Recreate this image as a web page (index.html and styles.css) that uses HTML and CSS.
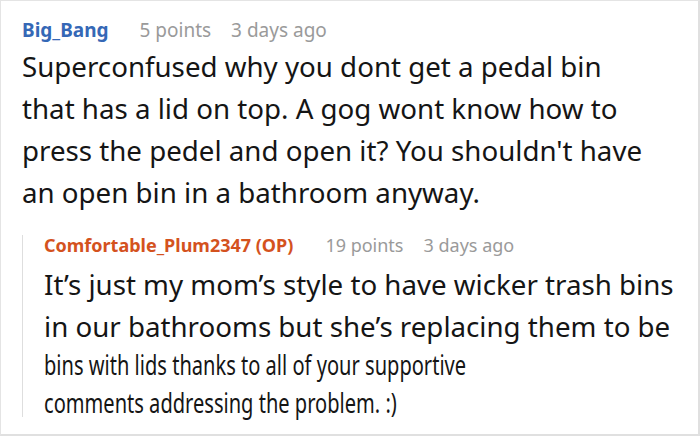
FILE: index.html
```html
<!DOCTYPE html>
<html>
<head>
<meta charset="utf-8">
<link rel="stylesheet" href="styles.css">
</head>
<body>
<div class="frame">
  <div class="comment">
    <div class="meta">
      <span class="author">Big_Bang</span>
      <span class="info">5 points</span>
      <span class="info">3 days ago</span>
    </div>
    <div class="text">
      <span class="line">Superconfused why you dont get a pedal bin</span>
      <span class="line">that has a lid on top. A gog wont know how to</span>
      <span class="line">press the pedel and open it? You shouldn't have</span>
      <span class="line">an open bin in a bathroom anyway.</span>
    </div>
    <div class="reply">
      <div class="meta reply-meta">
        <span class="author op">Comfortable_Plum2347 (OP)</span>
        <span class="info">19 points</span>
        <span class="info">3 days ago</span>
      </div>
      <div class="text reply-text">
        <span class="line">It’s just my mom’s style to have wicker trash bins</span>
        <span class="line">in our bathrooms but she’s replacing them to be</span>
        <div class="squeezed">
          <span class="line">bins with lids thanks to all of your supportive</span>
          <span class="line">comments addressing the problem. :)</span>
        </div>
      </div>
    </div>
  </div>
</div>
</body>
</html>
```

FILE: styles.css
```css
* { box-sizing: border-box; }
html, body {
  margin: 0;
  padding: 0;
  background: #ffffff;
}
body {
  font-family: "Noto Sans", "Open Sans", sans-serif;
  color: #151515;
}
.frame {
  width: 700px;
  height: 436px;
  border: 1px solid #e4e4e4;
  border-right: 2px solid #e0e0e0;
  border-bottom: 2px solid #e0e0e0;
  overflow: hidden;
}
.comment {
  padding: 17px 20px 0 21px;
}
.meta {
  display: flex;
  align-items: baseline;
  font-size: 19px;
  line-height: 24px;
  white-space: nowrap;
}
.author {
  font-weight: 700;
  color: #3568b6;
  margin-right: 31px;
}
.author.op {
  color: #d4521e;
  margin-right: 32px;
}
.info {
  color: #9a9a9a;
  margin-right: 20px;
}
.text {
  margin-top: 3px;
  font-size: 27.7px;
  line-height: 42px;
}
.line {
  display: block;
  white-space: nowrap;
}
.reply {
  margin-top: 23px;
  border-left: 1px solid #dedede;
  padding-left: 21px;
  height: 182px;
}
.reply-meta {
  font-size: 18px;
  line-height: 20px;
  margin-top: -1px;
}
.reply-text {
  margin-top: 8px;
}
.squeezed {
  margin-top: -2px;
  line-height: 38px;
  transform: scaleX(0.725);
  transform-origin: left top;
}
```
